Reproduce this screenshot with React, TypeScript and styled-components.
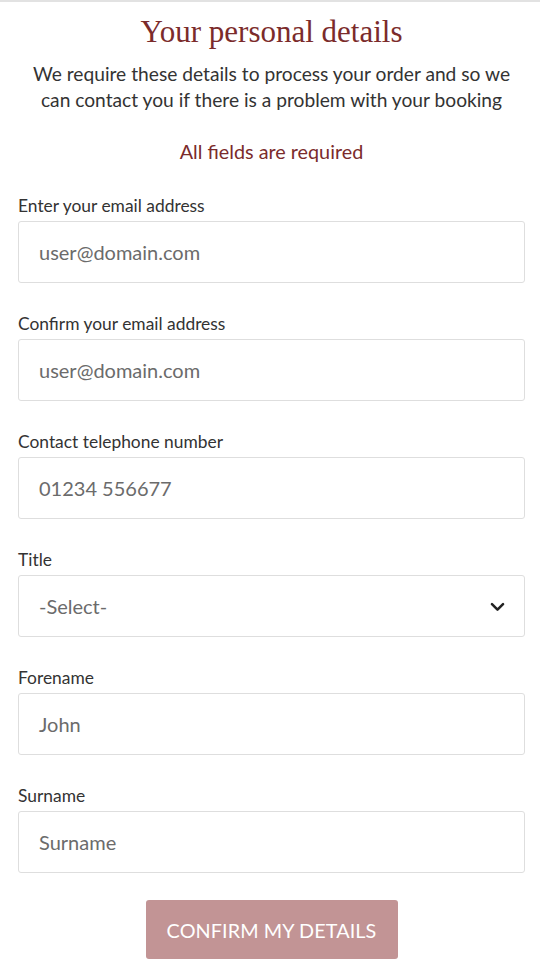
import React from "react";
import styled, { createGlobalStyle } from "styled-components";

const Global = createGlobalStyle`
  html, body { margin: 0; padding: 0; background: #fff; }
  body { font-family: "Lato", "Open Sans", sans-serif; color: #333; }
  * { box-sizing: border-box; }
`;

const Page = styled.div`
  border-top: 2px solid #e2e2e2;
  padding: 12px 15px 0 18px;
  display: flex;
  flex-direction: column;
`;

const Title = styled.h1`
  margin: 0;
  font-family: "Liberation Serif", "DejaVu Serif", serif;
  font-weight: 400;
  font-size: 31px;
  line-height: 36px;
  color: #7b2b2b;
  text-align: center;
`;

const Intro = styled.p`
  margin: 11px 0 0;
  font-size: 19.2px;
  line-height: 26px;
  color: #333;
  text-align: center;
`;

const Required = styled.p`
  margin: 26px 0 0;
  font-size: 19.8px;
  line-height: 24px;
  color: #7b2b2b;
  text-align: center;
`;

const Form = styled.form`
  display: flex;
  flex-direction: column;
  gap: 31px;
  margin-top: 33px;
`;

const Field = styled.div`
  display: flex;
  flex-direction: column;
  gap: 6px;
`;

const Label = styled.label`
  font-size: 17.4px;
  line-height: 19px;
  color: #333;
`;

const Box = styled.div`
  height: 62px;
  border: 1px solid #dedede;
  border-radius: 3px;
  background: #fff;
  display: flex;
  align-items: center;
  padding: 0 20px;
`;

const Value = styled.span`
  font-size: 20px;
  color: #6b6b6b;
  flex: 1;
`;

const Chevron = styled.svg`
  width: 19px;
  height: 19px;
  margin-right: -3px;
`;

const Actions = styled.div`
  display: flex;
  justify-content: center;
  margin-top: 27px;
`;

const Button = styled.button`
  width: 252px;
  height: 59px;
  border: none;
  border-radius: 3px;
  background: #c29495;
  color: #fff;
  font-family: "Lato", "Open Sans", sans-serif;
  font-size: 19.8px;
  letter-spacing: 0.1px;
  padding: 0;
`;

const fields: { label: string; value: string; select?: boolean }[] = [
  { label: "Enter your email address", value: "user@domain.com" },
  { label: "Confirm your email address", value: "user@domain.com" },
  { label: "Contact telephone number", value: "01234 556677" },
  { label: "Title", value: "-Select-", select: true },
  { label: "Forename", value: "John" },
  { label: "Surname", value: "Surname" },
];

export default function App() {
  return (
    <>
      <Global />
      <Page>
        <Title>Your personal details</Title>
        <Intro>
          We require these details to process your order and so we
          <br />
          can contact you if there is a problem with your booking
        </Intro>
        <Required>All fields are required</Required>
        <Form onSubmit={(e) => e.preventDefault()}>
          {fields.map((f) => (
            <Field key={f.label}>
              <Label>{f.label}</Label>
              <Box>
                <Value>{f.value}</Value>
                {f.select && (
                  <Chevron viewBox="0 0 24 24" fill="none" stroke="#222" strokeWidth="3.2" strokeLinecap="round" strokeLinejoin="round">
                    <path d="M5 9l7 7 7-7" />
                  </Chevron>
                )}
              </Box>
            </Field>
          ))}
        </Form>
        <Actions>
          <Button type="button">CONFIRM MY DETAILS</Button>
        </Actions>
      </Page>
    </>
  );
}
